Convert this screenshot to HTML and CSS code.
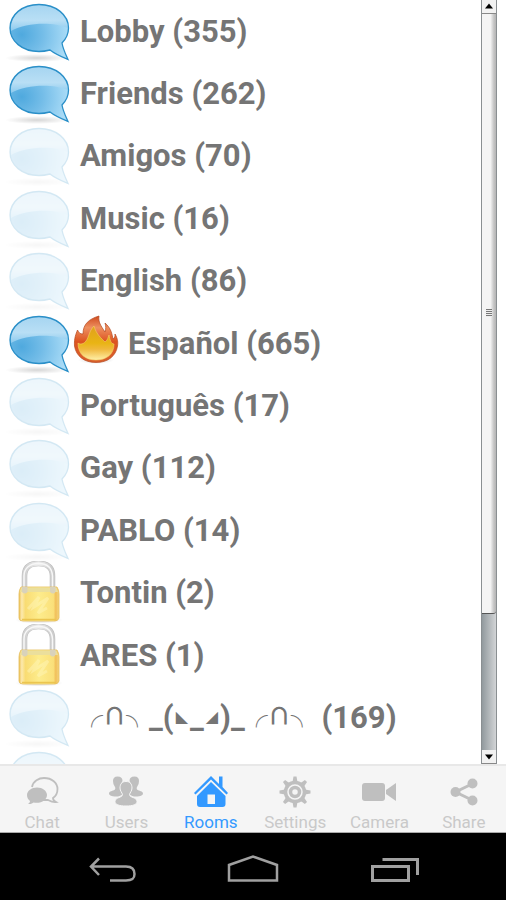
FILE: index.html
```html
<!DOCTYPE html>
<html lang="en">
<head>
<meta charset="utf-8">
<meta name="viewport" content="width=device-width, initial-scale=1">
<title>Rooms</title>
<link rel="stylesheet" href="styles.css">
</head>
<body>
<svg class="sprite" aria-hidden="true">
  <defs>
    <radialGradient id="deep" cx=".2" cy=".55" r=".8">
      <stop offset="0" stop-color="#4fa9de"/><stop offset=".45" stop-color="#74bde8"/><stop offset="1" stop-color="#aadcf7"/>
    </radialGradient>
    <linearGradient id="gloss" x1="0" y1="0" x2="0" y2="1">
      <stop offset="0" stop-color="#a6d5f1"/><stop offset=".6" stop-color="#b9dff5"/><stop offset="1" stop-color="#8ccaee"/>
    </linearGradient>
    <radialGradient id="shade"><stop offset="0" stop-color="#000" stop-opacity=".16"/><stop offset="1" stop-color="#000" stop-opacity="0"/></radialGradient>
    <linearGradient id="steel" x1="0" y1="0" x2="1" y2="0">
      <stop offset="0" stop-color="#d0d0d0"/><stop offset=".5" stop-color="#ededed"/><stop offset="1" stop-color="#cccccc"/>
    </linearGradient>
    <linearGradient id="brass" x1="0" y1="0" x2="1" y2="0">
      <stop offset="0" stop-color="#ecc258"/><stop offset=".07" stop-color="#fce9ae"/><stop offset=".16" stop-color="#f9dc73"/><stop offset=".5" stop-color="#fdec8c"/><stop offset=".86" stop-color="#fae07a"/><stop offset=".92" stop-color="#f1bf5a"/><stop offset="1" stop-color="#f5d680"/>
    </linearGradient>
    <linearGradient id="flame" x1="0" y1="0" x2="0" y2="1">
      <stop offset="0" stop-color="#cf4a1e"/><stop offset=".25" stop-color="#ee9060"/><stop offset=".55" stop-color="#dd5420"/><stop offset="1" stop-color="#d9602c"/>
    </linearGradient>
    <linearGradient id="core" x1="0" y1="0" x2="0" y2="1">
      <stop offset="0" stop-color="#e0a01c"/><stop offset=".5" stop-color="#e9b414"/><stop offset=".68" stop-color="#f0b83c"/><stop offset="1" stop-color="#fff0a8"/>
    </linearGradient>
  </defs>
  <symbol id="bubble" viewBox="0 0 72 62">
    <ellipse cx="37" cy="58" rx="32" ry="4" fill="url(#shade)"/>
    <path d="M50 50C46 51 42 51.500 39 51.500C22 51.500 10 41 10 28S22 4.500 39 4.500S68.500 15 68.500 28C68.500 34 66 39 62 43C63 49 65.500 54 68 59.500C61 56.500 55 54 50 50Z" fill="url(#deep)"/>
    <path d="M11 31C10 15 22 5 39 5S67 15 67.500 28C54 22 27 22 11 31Z" fill="url(#gloss)"/>
    <path d="M50 50C46 51 42 51.500 39 51.500C22 51.500 10 41 10 28S22 4.500 39 4.500S68.500 15 68.500 28C68.500 34 66 39 62 43C63 49 65.500 54 68 59.500C61 56.500 55 54 50 50Z" fill="none" stroke="#2a8fc8" stroke-width="1.300"/>
  </symbol>
  <symbol id="lock" viewBox="0 0 72 62">
    <ellipse cx="39" cy="59" rx="24" ry="4" fill="url(#shade)"/>
    <path d="M24.500 35V15C24.500 6 30 2.500 38.500 2.500S52.500 6 52.500 15V35" fill="none" stroke="#bcbcbc" stroke-width="5.500"/>
    <path d="M24.500 35V15C24.500 6 30 2.500 38.500 2.500S52.500 6 52.500 15V35" fill="none" stroke="url(#steel)" stroke-width="4.500"/>
    <path d="M24 30V15C24 7 30 2.500 38.500 2.500S52 7 52.500 15V30" fill="none" stroke="#f7f7f7" stroke-width="1.500"/>
    <path d="M21 26H57Q59 29 59 33V57Q58 60 55 60H23Q19 60 19 57V33Q19 29 21 26Z" fill="url(#brass)" stroke="#e6bd58" stroke-width=".8"/>
    <path d="M21.500 26.500H56.500L58 31H20Z" fill="#ebdf9c"/>
    <path d="M22 26V31Q25 34 27.500 31V26ZM50 26V31Q53 34 55.500 31V26Z" fill="#d9d2bb"/>
    <path d="M28 48L39 36L34 46L48 37L38 52L47 47" stroke="#fff6bd" stroke-width="3" fill="none" opacity=".45"/>
    <path d="M22 58.500H56" stroke="#ebc550" stroke-width="1.500"/>
  </symbol>
  <symbol id="fire" viewBox="0 0 48 62">
    <ellipse cx="24" cy="48" rx="18" ry="4" fill="url(#shade)"/>
    <path d="M2.500 34C2 26 4 22 5.500 18C7 21 8 22 11 22C11 12 17 7 27 4C26 10 29 14 33 20C34 17 34 14 33 11C39 16 40 22 41 27C43 26 43 24 43 22C46 27 46 31 45.500 34C44 44 36 50.500 24 50.500S4 44 2.500 34Z" fill="url(#flame)" stroke="#b5481e" stroke-width=".7"/>
    <path d="M6 31C8 33 12 32 14 29C17 25 17 19 22 14C24 22 30 27 33 30C36 28 36 25 37 23C38 28 39 32 42 32C42 42 35 48 24 48S6 42 6 31Z" fill="url(#core)" stroke="#f4d26a" stroke-width=".6"/>
  </symbol>
</svg>

<main class="rooms">
  <ul class="list">
    <li><a class="room" href="#"><svg class="icon"><use href="#bubble"/></svg><span class="name">Lobby (355)</span></a></li>
    <li><a class="room" href="#"><svg class="icon"><use href="#bubble"/></svg><span class="name">Friends (262)</span></a></li>
    <li><a class="room" href="#"><svg class="icon quiet"><use href="#bubble"/></svg><span class="name">Amigos (70)</span></a></li>
    <li><a class="room" href="#"><svg class="icon quiet"><use href="#bubble"/></svg><span class="name">Music (16)</span></a></li>
    <li><a class="room" href="#"><svg class="icon quiet"><use href="#bubble"/></svg><span class="name">English (86)</span></a></li>
    <li><a class="room" href="#"><svg class="icon"><use href="#bubble"/></svg><svg class="hot"><use href="#fire"/></svg><span class="name">Español (665)</span></a></li>
    <li><a class="room" href="#"><svg class="icon quiet"><use href="#bubble"/></svg><span class="name">Português (17)</span></a></li>
    <li><a class="room" href="#"><svg class="icon quiet"><use href="#bubble"/></svg><span class="name">Gay (112)</span></a></li>
    <li><a class="room" href="#"><svg class="icon quiet"><use href="#bubble"/></svg><span class="name">PABLO (14)</span></a></li>
    <li><a class="room" href="#"><svg class="icon"><use href="#lock"/></svg><span class="name">Tontin (2)</span></a></li>
    <li><a class="room" href="#"><svg class="icon"><use href="#lock"/></svg><span class="name">ARES (1)</span></a></li>
    <li><a class="room" href="#"><svg class="icon quiet"><use href="#bubble"/></svg><span class="name"><span class="sym">╭∩╮</span>_(<span class="tri">◣</span>_<span class="tri">◢</span>)_<span class="sym">╭∩╮</span> (169)</span></a></li>
    <li><a class="room" href="#" aria-label="Room"><svg class="icon quiet"><use href="#bubble"/></svg></a></li>
  </ul>
  <div class="scrollbar">
    <button class="arrow" aria-label="Scroll up"><svg viewBox="0 0 14 13"><path d="M7 3.500L11 8.500H3Z"/></svg></button>
    <div class="track"><div class="thumb"><span class="grip"></span></div></div>
    <button class="arrow" aria-label="Scroll down"><svg viewBox="0 0 14 13"><path d="M7 9.500L11 4.500H3Z"/></svg></button>
  </div>
</main>

<nav class="tabs">
  <a class="tab" href="#"><svg viewBox="0 0 40 36"><path d="M10 13C11 7 17 4 22 4C30 4 35.500 9 35.500 15C35.500 19 34 22 31 24C31 26 32 27 34 28C31 28.500 28 27 26 26H21" fill="none" stroke="currentColor" stroke-width="1.800"/><path d="M15 13.500C9.500 13.500 5 17 5 21C5 23.500 6.200 25.500 8 27C8 28 7.500 29 6 30C9 30.200 10.500 29.500 11.500 28.500C19 30 25 26 25 21C25 17 20.500 13.500 15 13.500Z"/></svg><span>Chat</span></a>
  <a class="tab" href="#"><svg viewBox="0 0 40 36"><path d="M11.500 2.500C15 2.500 16.500 4 16.500 7Q14 10 14.500 13.500Q14 17 17 20Q14 22 12 22.500C7 22.500 3 22 3 19.500C3 17 7 17 9 15.500Q10 14 8.500 12Q7 10 7 7C7 4 8.500 2.500 11.500 2.500ZM28.500 2.500C25 2.500 23.500 4 23.500 7Q26 10 25.500 13.500Q26 17 23 20Q26 22 28 22.500C33 22.500 37 22 37 19.500C37 17 33 17 31 15.500Q30 14 31.500 12Q33 10 33 7C33 4 31.500 2.500 28.500 2.500Z"/><path d="M20 7.500C24 7.500 26 10 26 14C26 17 24 18.500 23.500 20.500C23.500 24 31 23 31 27.500C31 30.500 27 32 20 32S9 30.500 9 27.500C9 23 16.500 24 16.500 20.500C16 18.500 14 17 14 14C14 10 16 7.500 20 7.500Z" stroke="#f5f5f5"/></svg><span>Users</span></a>
  <a class="tab current" href="#" aria-current="page"><svg viewBox="0 0 40 36"><path d="M20 2L28 10V2.500H31.500V13L37 19L35.500 20.500L20 5.500L4.500 20.500L3 19Z"/><path fill-rule="evenodd" d="M20 8L34.500 22V30Q34.500 33 31.500 33H9Q6 33 6 30V22ZM16.500 20.500V30H24V20.500Z"/></svg><span>Rooms</span></a>
  <a class="tab" href="#"><svg viewBox="0 0 40 36"><g id="teeth"><path d="M17.500 8L18.500 2.500H21.500L22.500 8ZM17.500 28L18.500 33.500H21.500L22.500 28ZM10 15.500L4.500 16.500V19.500L10 20.500ZM30 15.500L35.500 16.500V19.500L30 20.500Z"/></g><use href="#teeth" transform="rotate(45 20 18)"/><circle cx="20" cy="18" r="9.500" fill="none" stroke="currentColor" stroke-width="3.500"/><circle cx="20" cy="18" r="4.500" fill="none" stroke="currentColor" stroke-width="3.500"/></svg><span>Settings</span></a>
  <a class="tab" href="#"><svg viewBox="0 0 40 36"><rect x="3" y="9" width="23" height="18" rx="3"/><path d="M37 9V27L27 20V16Z"/></svg><span>Camera</span></a>
  <a class="tab" href="#"><svg viewBox="0 0 40 36"><path d="M29 9.500L11.500 18L29 26.500" fill="none" stroke="currentColor" stroke-width="3"/><circle cx="28.500" cy="9.500" r="5"/><circle cx="11.500" cy="18" r="5"/><circle cx="28.500" cy="26.500" r="5"/></svg><span>Share</span></a>
</nav>

<footer class="system">
  <button aria-label="Back"><svg viewBox="0 0 60 40"><path d="M18 11.500L10 19.500L18 28M10 19.500H45C51 19.500 53.500 22 53.500 27S51 33.500 45 33.500H29" stroke-width="2.500"/></svg></button>
  <button aria-label="Home"><svg viewBox="0 0 60 40"><path d="M6 33.500V18L30 9.500L54 18V33.500Z" stroke-width="2.500"/></svg></button>
  <button aria-label="Recent apps"><svg viewBox="0 0 60 40"><path d="M7.500 19.500H43.500V33.500H7.500ZM17.500 12.500H52.500V28" stroke-width="3"/></svg></button>
</footer>
</body>
</html>
```
FILE: styles.css
```css
* { box-sizing: border-box; }

body {
  margin: 0;
  height: 100vh;
  display: flex;
  flex-direction: column;
  background: #fff;
  font-family: Roboto, "Liberation Sans", sans-serif;
}

a { color: inherit; text-decoration: none; }
button { padding: 0; border: 0; background: none; }

.sprite { position: absolute; width: 0; height: 0; }

.rooms {
  flex: 1;
  min-height: 0;
  display: flex;
  overflow: hidden;
}

.list {
  flex: 1;
  margin: 0;
  padding: 0;
  list-style: none;
  display: grid;
  grid-template-rows: repeat(3, 62px 62px 63px 62px 63px);
}

.room { display: flex; align-items: flex-start; }
.icon { flex: none; width: 72px; height: 62px; }
.quiet { opacity: 0.2; }
.hot { flex: none; width: 48px; height: 62px; }

.name {
  padding-left: 8px;
  font-size: 31px;
  font-weight: 700;
  line-height: 64px;
  color: #757575;
  white-space: nowrap;
}

.sym {
  font-family: "Noto Sans CJK JP", sans-serif;
  font-size: 23px;
  font-weight: 700;
  line-height: 24px;
  vertical-align: 4px;
}
.tri {
  padding: 0 2px;
  font-family: "DejaVu Sans", sans-serif;
  font-size: 16px;
  font-weight: 400;
  line-height: 24px;
  vertical-align: 6px;
}

.scrollbar {
  flex: none;
  width: 16px;
  margin-right: 9px;
  display: flex;
  flex-direction: column;
  border: solid #8a8f92;
  border-width: 0 1px;
}

.arrow {
  height: 14px;
  background: #f2f2f2;
  border-bottom: 1px solid #888;
}
.arrow svg { display: block; width: 100%; height: 13px; }

.track {
  flex: 1;
  background: linear-gradient(90deg, #929a9e, #d2d4d6);
}

.thumb {
  height: 81.5%;
  display: flex;
  align-items: center;
  justify-content: center;
  background: linear-gradient(90deg, #f4f4f4 60%, #c4c4c4 85%, #b5b5b5);
  border-bottom: 1px solid #555;
  border-radius: 0 0 3px 0;
}

.grip {
  width: 6px;
  height: 8px;
  background: repeating-linear-gradient(#777 0 1px, #eee 1px 2px);
}

.tabs {
  flex: none;
  height: 69px;
  display: grid;
  grid-template-columns: repeat(6, 1fr);
  background: #f5f5f5;
  border-top: 2px solid #e8e8e8;
  border-bottom: 1px solid #aaa;
}

.tab {
  display: flex;
  flex-direction: column;
  align-items: center;
  padding-top: 8px;
  color: #c9c9c9;
  font-size: 17px;
  line-height: 24px;
}
.tab svg { width: 40px; height: 36px; fill: currentColor; color: #bfbfbf; }
.current, .current svg { color: #3399ff; }

.system {
  flex: none;
  height: 67px;
  display: flex;
  justify-content: center;
  gap: 82px;
  padding-top: 14px;
  background: #000;
}
.system svg { display: block; width: 60px; height: 40px; fill: none; stroke: #a0a0a0; }
.system button { height: 40px; }
```
